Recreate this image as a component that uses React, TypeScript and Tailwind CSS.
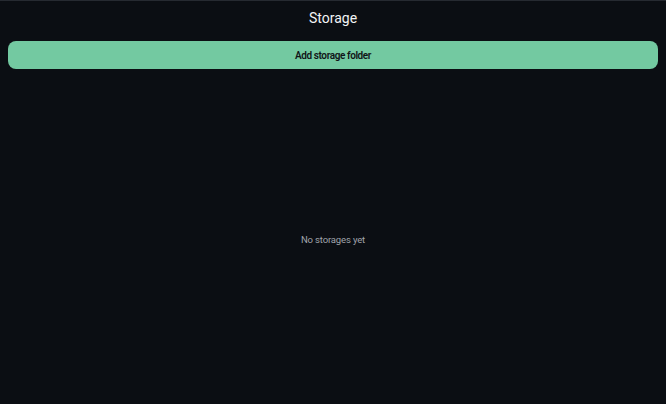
export default function App() {
  return (
    <main
      className="flex h-[404px] w-full flex-col border-t border-[#262a31] bg-[#0b0e13] px-2"
      style={{ fontFamily: "Roboto, 'Noto Sans', sans-serif" }}
    >
      <h1 className="mt-[8px] text-center text-[14px] leading-[18px] font-normal text-[#f3f4f6]">
        Storage
      </h1>
      <button className="mt-[14px] h-[28px] w-full rounded-[8px] bg-[#73c9a1] text-[10px] font-semibold tracking-[-0.4px] text-[#101418]">
        Add storage folder
      </button>
      <div className="flex flex-1 items-center justify-center pt-[8px]">
        <p className="text-[9.5px] tracking-[-0.15px] text-[#a0a4ab]">No storages yet</p>
      </div>
    </main>
  );
}
